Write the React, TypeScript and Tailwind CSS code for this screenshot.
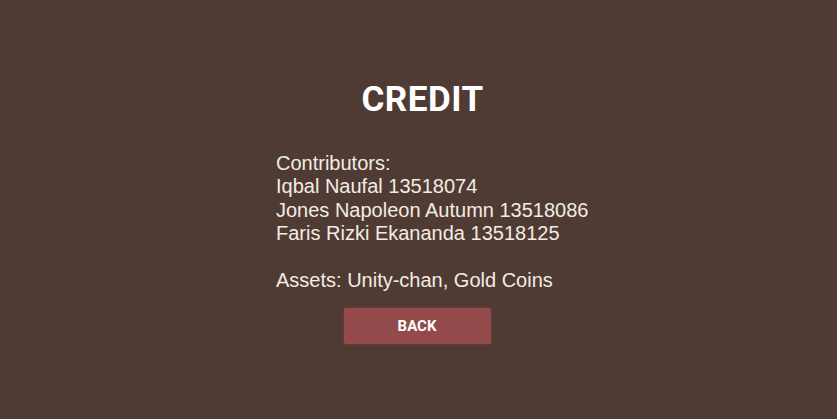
export default function App() {
  return (
    <div className="w-[837px] h-[419px] bg-[#4f3b33] flex flex-col items-center overflow-hidden">
      <h1 className="mt-[79px] ml-[8px] text-white font-bold text-[35px] leading-[42px] tracking-[0.5px]" style={{ fontFamily: "Roboto, sans-serif" }}>
        CREDIT
      </h1>
      <div className="mt-[31px] w-[286px] ml-[1px] text-[#f3ece4] text-[20px] leading-[23.4px]" style={{ fontFamily: '"Liberation Sans", Arial, sans-serif' }}>
        <div className="w-[400px]">
          <p>Contributors:</p>
          <p>Iqbal Naufal 13518074</p>
          <p>Jones Napoleon Autumn 13518086</p>
          <p>Faris Rizki Ekananda 13518125</p>
          <p className="mt-[23.4px]">Assets: Unity-chan, Gold Coins</p>
        </div>
      </div>
      <button className="mt-[15px] ml-[-3px] w-[149px] h-[38px] bg-[#934a4a] border border-[#6e3535] rounded-[3px] text-white font-bold text-[15px]" style={{ fontFamily: "Roboto, sans-serif" }}>
        BACK
      </button>
    </div>
  );
}
